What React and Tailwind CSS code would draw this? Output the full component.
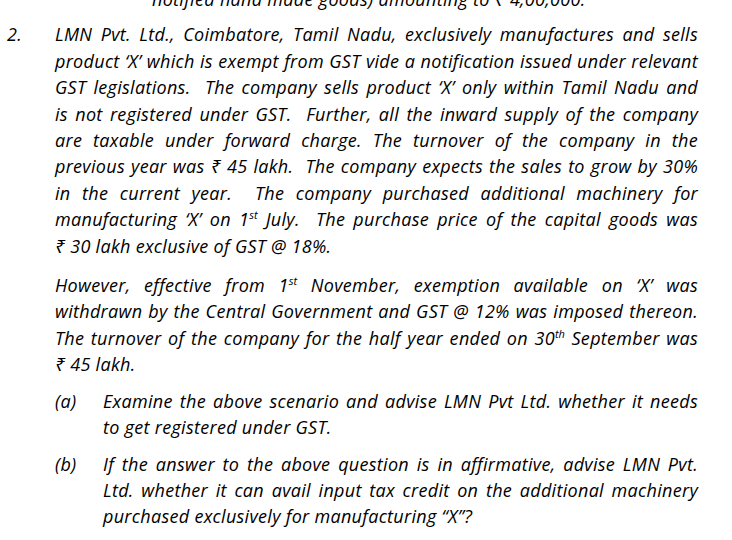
import React from "react";

const J = "whitespace-nowrap text-justify [text-align-last:justify]";
const L = "whitespace-nowrap";

const Sup = ({ children }) => (
  <span className="text-[11px] leading-none relative -top-[7px] tracking-normal">{children}</span>
);

const para1 = [
  [J, "LMN Pvt. Ltd., Coimbatore, Tamil Nadu, exclusively manufactures and sells"],
  [J, "product ‘X’ which is exempt from GST vide a notification issued under relevant"],
  [J, "GST legislations.\u00a0 The company sells product ‘X’ only within Tamil Nadu and"],
  [J, "is not registered under GST.\u00a0 Further, all the inward supply of the company"],
  [J, "are taxable under forward charge. The turnover of the company in the"],
  [J, "previous year was ₹ 45 lakh.\u00a0 The company expects the sales to grow by 30%"],
  [J, "in the current year.\u00a0 The company purchased additional machinery for"],
  [J, <>manufacturing ‘X’ on 1<Sup>st</Sup> July.&nbsp; The purchase price of the capital goods was</>],
  [L, "₹ 30 lakh exclusive of GST @ 18%."],
];

const para2 = [
  [J, <>However, effective from 1<Sup>st</Sup> November, exemption available on ‘X’ was</>],
  [J, "withdrawn by the Central Government and GST @ 12% was imposed thereon."],
  [J, <>The turnover of the company for the half year ended on 30<Sup>th</Sup> September was</>],
  [L, "₹ 45 lakh."],
];

const partA = [
  [J, "Examine the above scenario and advise LMN Pvt Ltd. whether it needs"],
  [L, "to get registered under GST."],
];

const partB = [
  [J, "If the answer to the above question is in affirmative, advise LMN Pvt."],
  [J, "Ltd. whether it can avail input tax credit on the additional machinery"],
  [L, "purchased exclusively for manufacturing “X”?"],
];

const Lines = ({ lines }) => (
  <div>
    {lines.map(([cls, text], i) => (
      <div key={i} className={cls}>{text}</div>
    ))}
  </div>
);

const SubPart = ({ label, lines }) => (
  <div className="flex mt-[10px]">
    <div className="w-[48px] shrink-0">{label}</div>
    <div className="flex-1 min-w-0">
      <Lines lines={lines} />
    </div>
  </div>
);

export default function App() {
  return (
    <div
      className="w-[732px] h-[540px] overflow-hidden bg-white text-black italic text-[18px] tracking-[0.3px] leading-[26.4px]"
      style={{ fontFamily: '"Open Sans", "Noto Sans", sans-serif' }}
    >
      <div className="pl-[152px] -mt-[14px]">notified hand made goods) amounting to ₹ 4,00,000.</div>
      <div className="flex mt-[9px] pr-[34px]">
        <div className="w-[55px] shrink-0 pl-[7px]">2.</div>
        <div className="flex-1 min-w-0">
          <Lines lines={para1} />
          <div className="mt-[13px]">
            <Lines lines={para2} />
          </div>
          <SubPart label="(a)" lines={partA} />
          <SubPart label="(b)" lines={partB} />
        </div>
      </div>
    </div>
  );
}
